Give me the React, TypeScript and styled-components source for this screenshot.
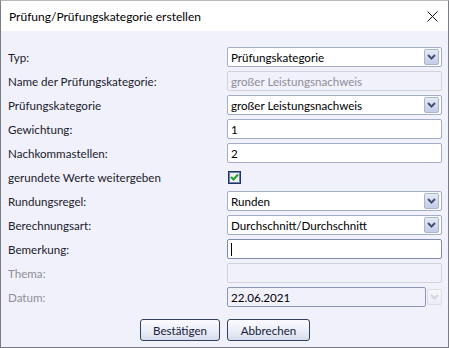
import styled, { createGlobalStyle, css } from "styled-components";

const GlobalStyle = createGlobalStyle`
  html, body {
    margin: 0;
    padding: 0;
    background: #ffffff;
  }
  body {
    font-family: Lato, "Open Sans", "Noto Sans", sans-serif;
    font-size: 11.6px;
    color: #1b1b2a;
  }
`;

const Window = styled.div`
  width: 449px;
  height: 348px;
  box-sizing: border-box;
  border: 1px solid #7c7c84;
  border-top-color: #b8b8bc;
  display: flex;
  flex-direction: column;
  background: #f1f1fc;
`;

const TitleBar = styled.div`
  height: 30px;
  display: flex;
  align-items: center;
  justify-content: space-between;
  padding: 0 9px 0 8px;
  background: #ffffff;
  color: #000000;
  font-size: 12px;
`;

const CloseButton = styled.button`
  width: 14px;
  height: 14px;
  padding: 0;
  border: 0;
  background: transparent;
  display: flex;
  align-items: center;
  justify-content: center;
`;

const Body = styled.div`
  flex: 1;
  display: flex;
  flex-direction: column;
  padding: 16px 6px 0 7px;
`;

const Form = styled.div`
  display: grid;
  grid-template-columns: 219px 215px;
  grid-auto-rows: 20px;
  row-gap: 4px;
`;

const Label = styled.div<{ $disabled?: boolean }>`
  display: flex;
  align-items: center;
  white-space: nowrap;
  color: ${(p) => (p.$disabled ? "#8e8e96" : "#1b1b2a")};
`;

const fieldBase = css`
  box-sizing: border-box;
  height: 20px;
  display: flex;
  align-items: center;
  padding: 0 2px 0 3px;
  border-radius: 2px;
  white-space: nowrap;
  overflow: hidden;
`;

const Field = styled.div<{ $state?: "normal" | "disabled" | "focused" | "readonly" }>`
  ${fieldBase}
  border: 1px solid
    ${(p) =>
      p.$state === "disabled"
        ? "#d2d2dc"
        : p.$state === "focused"
        ? "#7f8cab"
        : p.$state === "readonly"
        ? "#8b97b4"
        : "#a3adc6"};
  background: ${(p) =>
    p.$state === "disabled" || p.$state === "readonly" ? "#f1f1fc" : "#ffffff"};
  color: ${(p) => (p.$state === "disabled" ? "#8e8e96" : "#000000")};
`;

const ComboText = styled.span`
  flex: 1;
`;

const DropButton = styled.div<{ $disabled?: boolean }>`
  width: 15px;
  height: 16px;
  box-sizing: border-box;
  border-radius: 2px;
  display: flex;
  align-items: center;
  justify-content: center;
  border: 1px solid ${(p) => (p.$disabled ? "#dcdce4" : "#aab4cf")};
  background: ${(p) =>
    p.$disabled
      ? "linear-gradient(#f6f6fb, #ececf4)"
      : "linear-gradient(#e6ebf8, #c4cde6)"};
`;

const DateCell = styled.div`
  display: flex;
  gap: 1px;
  align-items: center;
`;

const DateField = styled(Field)`
  flex: 1;
`;

const Caret = styled.span`
  width: 1px;
  height: 13px;
  background: #000000;
`;

const CheckCell = styled.div`
  display: flex;
  align-items: center;
  padding-left: 1px;
`;

const CheckBox = styled.div`
  width: 13px;
  height: 13px;
  box-sizing: border-box;
  border: 1px solid #1d3563;
  outline: 1px solid #6d7fa6;
  outline-offset: -2px;
  background: #eeeef6;
  display: flex;
  align-items: center;
  justify-content: center;
`;

const Buttons = styled.div`
  display: flex;
  justify-content: center;
  gap: 7px;
  margin-top: 12px;
`;

const Button = styled.button<{ $width: number }>`
  width: ${(p) => p.$width}px;
  height: 22px;
  box-sizing: border-box;
  border: 1px solid #33405f;
  border-radius: 3px;
  background: linear-gradient(#fbfbff 0%, #eef1fa 45%, #d7ddec 100%);
  font-family: Lato, "Open Sans", sans-serif;
  font-size: 11.6px;
  color: #18203a;
  padding: 0;
`;

function Chevron({ disabled }: { disabled?: boolean }) {
  return (
    <svg width="9" height="6" viewBox="0 0 9 6">
      <path
        d="M1 1 L4.5 4.5 L8 1"
        fill="none"
        stroke={disabled ? "#d4d4de" : "#3f4f75"}
        strokeWidth="2"
      />
    </svg>
  );
}

function Combo({ value }: { value: string }) {
  return (
    <Field>
      <ComboText>{value}</ComboText>
      <DropButton>
        <Chevron />
      </DropButton>
    </Field>
  );
}

export default function App() {
  return (
    <>
      <GlobalStyle />
      <Window>
        <TitleBar>
          <span>Prüfung/Prüfungskategorie erstellen</span>
          <CloseButton aria-label="Schließen">
            <svg width="11" height="11" viewBox="0 0 11 11">
              <path d="M0.5 0.5 L10.5 10.5 M10.5 0.5 L0.5 10.5" stroke="#111" strokeWidth="1" />
            </svg>
          </CloseButton>
        </TitleBar>
        <Body>
          <Form>
            <Label>Typ:</Label>
            <Combo value="Prüfungskategorie" />

            <Label>Name der Prüfungskategorie:</Label>
            <Field $state="disabled">großer Leistungsnachweis</Field>

            <Label>Prüfungskategorie</Label>
            <Combo value="großer Leistungsnachweis" />

            <Label>Gewichtung:</Label>
            <Field>1</Field>

            <Label>Nachkommastellen:</Label>
            <Field>2</Field>

            <Label>gerundete Werte weitergeben</Label>
            <CheckCell>
              <CheckBox>
                <svg width="9" height="8" viewBox="0 0 9 8">
                  <path d="M1 4 L3.5 6.5 L8 1.5" fill="none" stroke="#23a02a" strokeWidth="2" />
                </svg>
              </CheckBox>
            </CheckCell>

            <Label>Rundungsregel:</Label>
            <Combo value="Runden" />

            <Label>Berechnungsart:</Label>
            <Combo value="Durchschnitt/Durchschnitt" />

            <Label>Bemerkung:</Label>
            <Field $state="focused">
              <Caret />
            </Field>

            <Label $disabled>Thema:</Label>
            <Field $state="disabled" />

            <Label $disabled>Datum:</Label>
            <DateCell>
              <DateField $state="readonly">22.06.2021</DateField>
              <DropButton $disabled>
                <Chevron disabled />
              </DropButton>
            </DateCell>
          </Form>
          <Buttons>
            <Button $width={80}>Bestätigen</Button>
            <Button $width={83}>Abbrechen</Button>
          </Buttons>
        </Body>
      </Window>
    </>
  );
}
